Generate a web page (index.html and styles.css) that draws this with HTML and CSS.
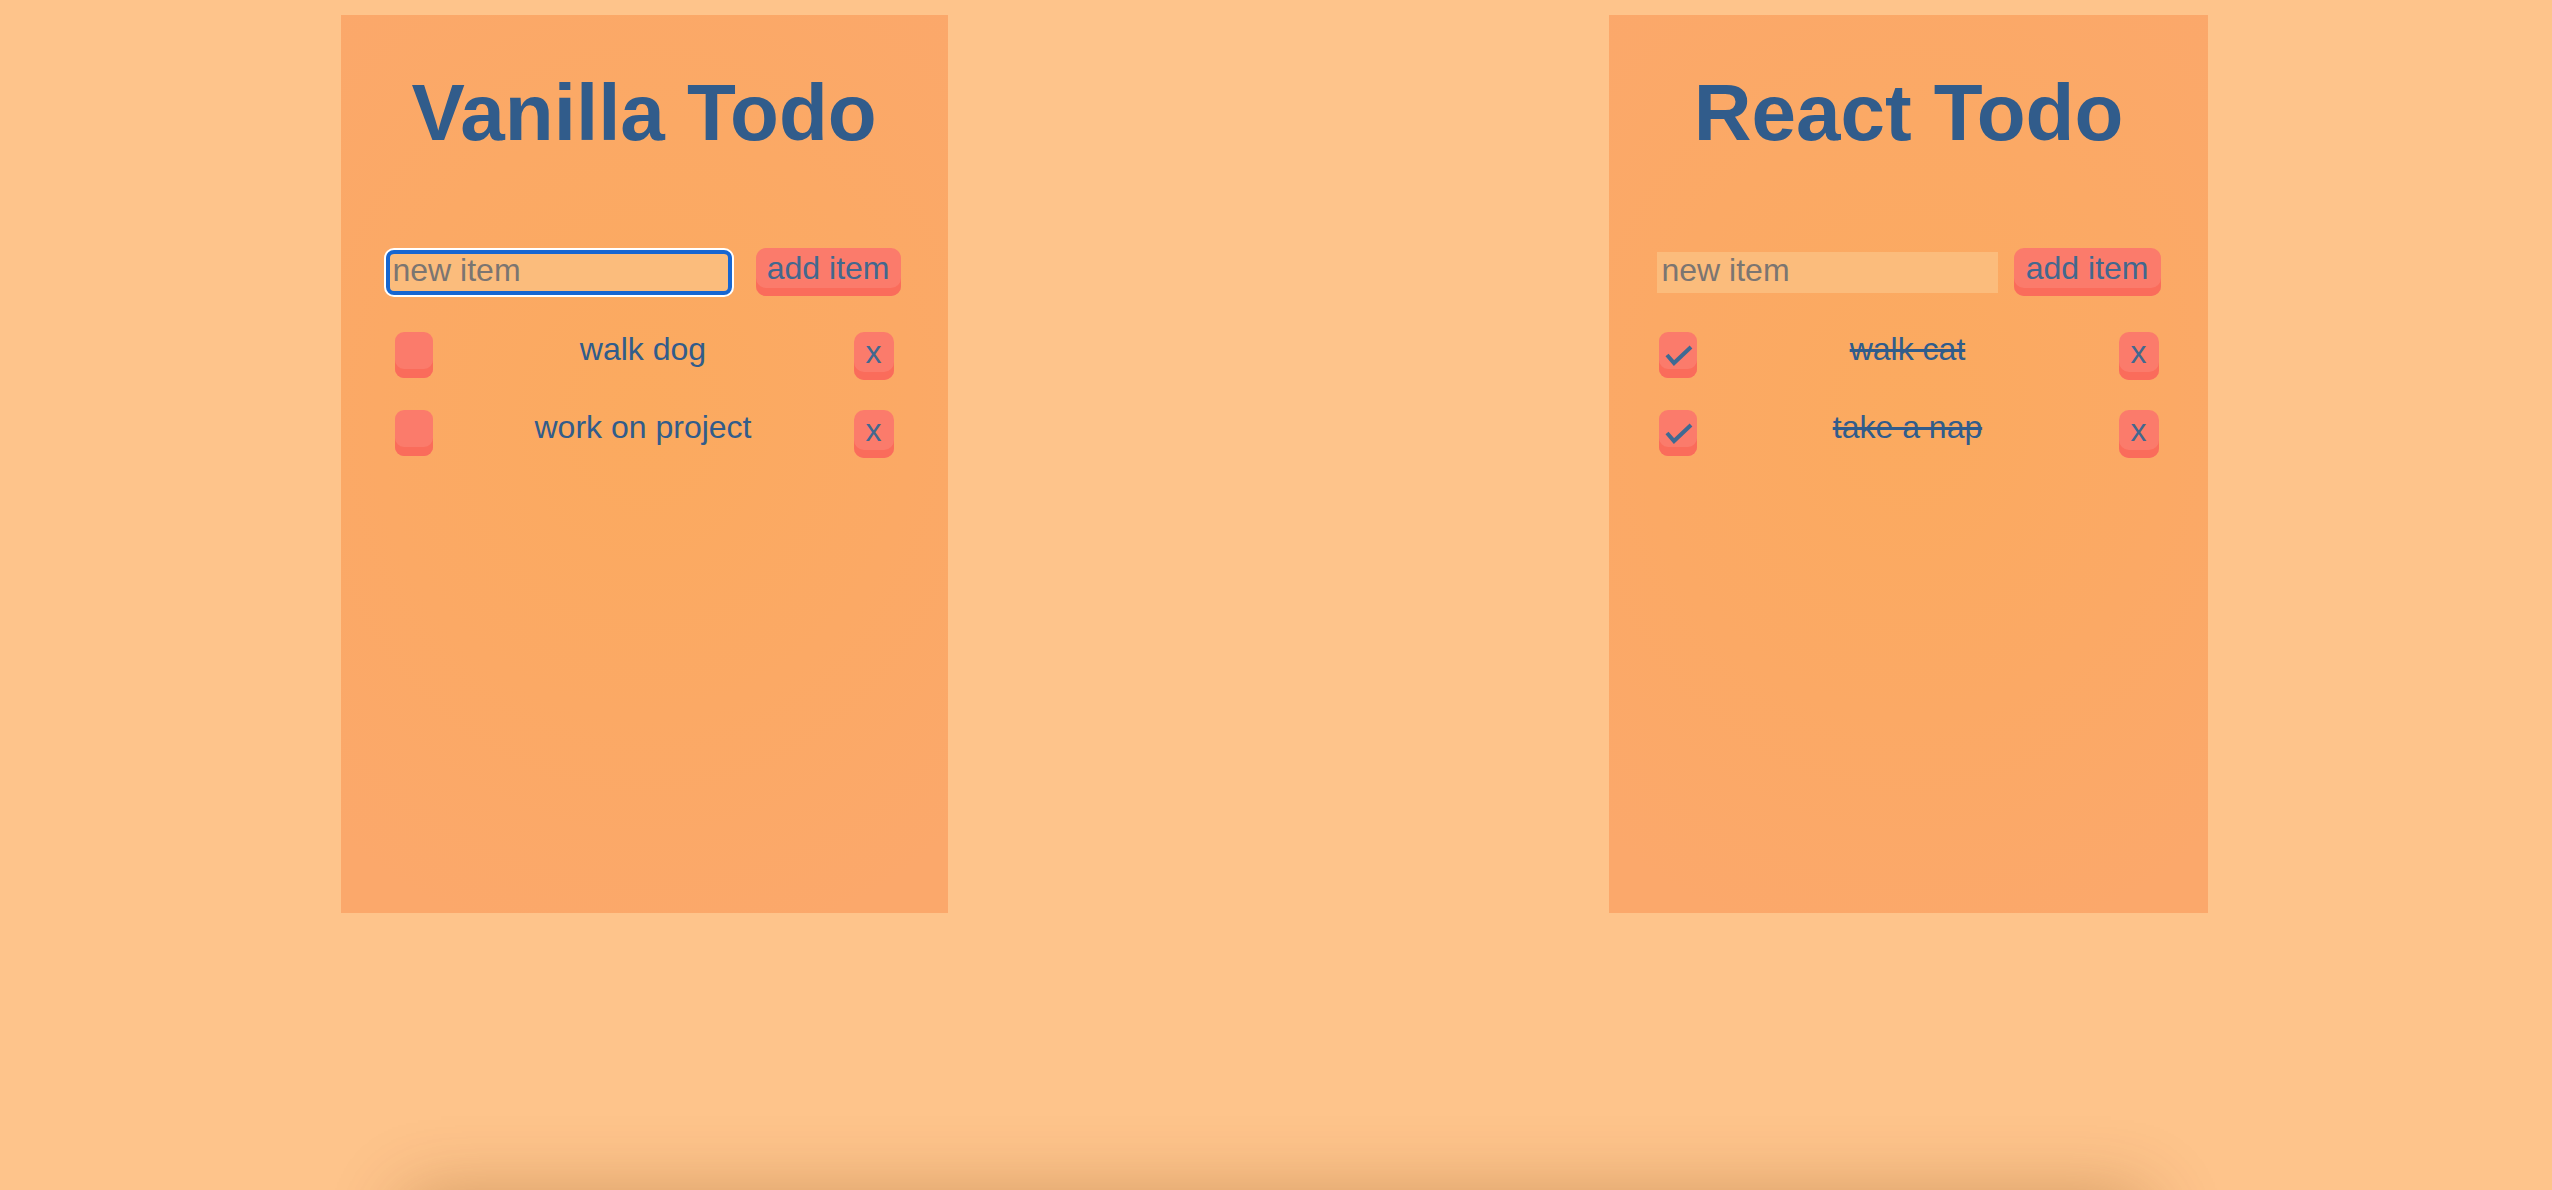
FILE: index.html
```html
<!DOCTYPE html>
<html lang="en">
<head>
<meta charset="utf-8">
<title>Todo</title>
<link rel="stylesheet" href="styles.css">
</head>
<body>
<main class="page">
  <section class="panel panel-vanilla">
    <h1 class="title">Vanilla Todo</h1>
    <form class="add-form">
      <input class="new-item is-focused" type="text" placeholder="new item">
      <button class="add-btn" type="button">add item</button>
    </form>
    <ul class="todo-list">
      <li class="todo">
        <span class="check"></span>
        <span class="todo-text">walk dog</span>
        <button class="remove" type="button">x</button>
      </li>
      <li class="todo">
        <span class="check"></span>
        <span class="todo-text">work on project</span>
        <button class="remove" type="button">x</button>
      </li>
    </ul>
  </section>

  <section class="panel panel-react">
    <h1 class="title">React Todo</h1>
    <form class="add-form">
      <input class="new-item" type="text" placeholder="new item">
      <button class="add-btn" type="button">add item</button>
    </form>
    <ul class="todo-list">
      <li class="todo is-done">
        <span class="check"><svg class="tick" viewBox="0 0 38 46" width="38" height="46"><polyline points="8,23 15,31 32,15" fill="none" stroke="#3f6a93" stroke-width="4"/></svg></span>
        <span class="todo-text">walk cat</span>
        <button class="remove" type="button">x</button>
      </li>
      <li class="todo is-done">
        <span class="check"><svg class="tick" viewBox="0 0 38 46" width="38" height="46"><polyline points="8,23 15,31 32,15" fill="none" stroke="#3f6a93" stroke-width="4"/></svg></span>
        <span class="todo-text">take a nap</span>
        <button class="remove" type="button">x</button>
      </li>
    </ul>
  </section>
</main>
<div class="shelf"></div>
</body>
</html>
```

FILE: styles.css
```css
html, body {
  margin: 0;
  padding: 0;
  overflow: hidden;
}

body {
  background: #fec48b;
  font-family: "Liberation Sans", Arial, Helvetica, sans-serif;
  color: #315c8b;
}

.page {
  display: grid;
  grid-template-columns: 1fr 1fr;
  justify-items: center;
  align-items: start;
  padding: 15px 12px 0;
}

.panel {
  box-sizing: border-box;
  height: 898px;
  padding: 0 47px;
  display: flex;
  flex-direction: column;
  background: radial-gradient(ellipse 80% 60% at 50% 45%, #fbaa5f 0%, #fba965 55%, #fba86b 100%);
}

.panel-vanilla {
  width: 607px;
}

.panel-react {
  width: 599px;
  padding: 0 47px 0 48px;
}

.title {
  margin: 53px 0 0;
  font-size: 80px;
  line-height: 90px;
  font-weight: bold;
  text-align: center;
  color: #315c8b;
}

.add-form {
  display: flex;
  align-items: center;
  gap: 26px;
  margin: 90px 0 0;
}

.panel-react .add-form {
  gap: 16px;
}

.new-item {
  flex: 1;
  min-width: 0;
  height: 41px;
  box-sizing: border-box;
  border: 0;
  margin: 0;
  padding: 0 5px 4px;
  background: #fbbc7c;
  font-family: "Liberation Sans", Arial, Helvetica, sans-serif;
  font-size: 32px;
  color: #315c8b;
  outline: none;
}

.new-item::placeholder {
  color: #7b7571;
  opacity: 1;
}

.new-item.is-focused {
  border-radius: 6px;
  outline: 4px solid #1766d1;
  outline-offset: -2px;
  box-shadow: 0 0 0 4px #ffffff;
}

.add-btn {
  flex: none;
  height: 48px;
  box-sizing: border-box;
  border: 0;
  margin: 0;
  padding: 0 11px 8px;
  border-radius: 10px;
  background: #fb7b6b;
  box-shadow: inset 0 -8px 0 #fa6c5b;
  font-family: "Liberation Sans", Arial, Helvetica, sans-serif;
  font-size: 32px;
  line-height: 40px;
  color: #42688f;
}

.panel-react .add-btn {
  padding: 0 12px 8px;
}

.todo-list {
  list-style: none;
  margin: 36px 7px 0;
  padding: 0;
  display: flex;
  flex-direction: column;
  gap: 30px;
}

.panel-react .todo-list {
  margin: 36px 2px 0;
}

.todo {
  display: flex;
  align-items: flex-start;
  height: 48px;
}

.check {
  flex: none;
  display: block;
  width: 38px;
  height: 46px;
  border-radius: 9px;
  background: #fb7b6b;
  box-shadow: inset 0 -9px 0 #fa6c5b;
}

.tick {
  display: block;
}

.todo-text {
  flex: 1;
  text-align: center;
  font-size: 32px;
  line-height: 34px;
  color: #315c8b;
}

.is-done .todo-text {
  text-decoration: line-through;
}

.remove {
  flex: none;
  width: 40px;
  height: 48px;
  box-sizing: border-box;
  border: 0;
  margin: 0;
  padding: 0 0 8px;
  border-radius: 10px;
  background: #fb7b6b;
  box-shadow: inset 0 -8px 0 #fa6c5b;
  font-family: "Liberation Sans", Arial, Helvetica, sans-serif;
  font-size: 32px;
  line-height: 40px;
  color: #42688f;
}

.shelf {
  width: 1740px;
  height: 300px;
  margin: 283px auto 0;
  background: #fec48b;
  box-shadow: 0 0 70px rgba(110, 55, 0, 0.32);
}
```
